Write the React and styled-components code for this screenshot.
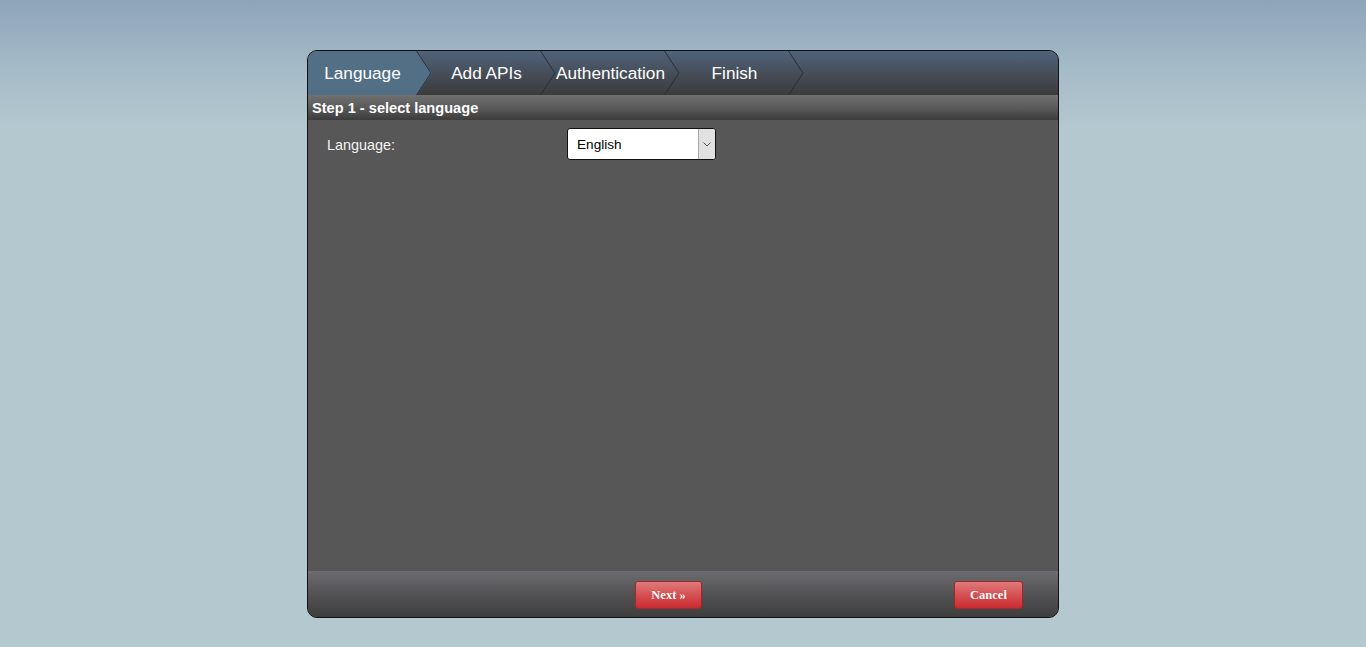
import React from "react";
import styled, { createGlobalStyle } from "styled-components";

const Global = createGlobalStyle`
  html, body { margin: 0; padding: 0; }
  body {
    min-height: 647px;
    background: linear-gradient(to bottom, #8ea5b9 0px, #a6bbc8 70px, #b4c8d0 130px, #b4c8d0 100%) no-repeat;
    background-color: #b4c8d0;
    font-family: "Liberation Sans", Arial, sans-serif;
  }
`;

const Page = styled.div`
  display: flex;
  justify-content: center;
  padding-top: 50px;
`;

const Panel = styled.div`
  width: 750px;
  height: 566px;
  border: 1px solid #111;
  border-radius: 10px;
  overflow: hidden;
  display: flex;
  flex-direction: column;
  background: #575757;
`;

const TabBar = styled.div`
  height: 44px;
  display: flex;
  background: linear-gradient(to bottom, #4f637b 0%, #454c56 55%, #3b3b3b 100%);
  flex-shrink: 0;
`;

const Tab = styled.div`
  position: relative;
  flex: 0 0 auto;
  width: ${(p) => (p.$first ? "124px" : "139px")};
  margin-left: ${(p) => (p.$first ? "0" : "-15px")};
  padding: 1px 15px 0 ${(p) => (p.$first ? "0" : "15px")};
  box-sizing: border-box;
  display: flex;
  align-items: center;
  justify-content: center;
  color: #fff;
  font-size: 17.2px;
  z-index: ${(p) => p.$z};
`;

const ActiveBg = styled.div`
  position: absolute;
  inset: 0;
  background: #536f85;
  clip-path: polygon(0 0, calc(100% - 15px) 0, 100% 50%, calc(100% - 15px) 100%, 0 100%);
`;

const TabLabel = styled.span`
  position: relative;
  white-space: nowrap;
`;

const Chevron = styled.svg`
  position: absolute;
  right: 0;
  top: 0;
  width: 16px;
  height: 44px;
`;

const StepHeader = styled.div`
  height: 25px;
  flex-shrink: 0;
  background: linear-gradient(to bottom, #707070 0%, #5a5a5a 50%, #3c3c3c 100%);
  color: #fff;
  font-weight: bold;
  font-size: 14.6px;
  display: flex;
  align-items: center;
  padding-left: 4px;
`;

const Content = styled.div`
  flex: 1;
  background: #575757;
  padding: 8px 0 0 19px;
`;

const Row = styled.div`
  display: flex;
  align-items: center;
  height: 32px;
`;

const Label = styled.span`
  width: 240px;
  color: #f2f2f2;
  font-size: 14.4px;
  padding-top: 2px;
`;

const Select = styled.div`
  width: 147px;
  height: 30px;
  border: 1px solid #111;
  border-radius: 3px;
  background: #fff;
  display: flex;
  overflow: hidden;
`;

const SelectText = styled.span`
  flex: 1;
  display: flex;
  align-items: center;
  padding: 1px 0 0 9px;
  font-size: 13.6px;
  color: #000;
`;

const SelectArrow = styled.span`
  width: 16px;
  background: #e1e1e1;
  border-left: 1px solid #a8a8a8;
  display: flex;
  align-items: center;
  justify-content: center;
`;

const Footer = styled.div`
  height: 46px;
  flex-shrink: 0;
  background: linear-gradient(to bottom, #6c6d70 0%, #555557 45%, #3d3d3d 100%);
  display: flex;
  align-items: center;
  padding-left: 327px;
`;

const Button = styled.button`
  height: 28px;
  width: ${(p) => p.$w}px;
  margin-left: ${(p) => p.$ml || 0}px;
  border: 1px solid #a3282b;
  border-radius: 3px;
  background: linear-gradient(to bottom, #e07a7a 0%, #d44c4e 55%, #c92c30 100%);
  color: #fff;
  font-family: "Liberation Serif", "Times New Roman", serif;
  font-weight: bold;
  font-size: 12.5px;
  padding: 0;
  margin-top: 2px;
  text-shadow: 0 0 1px rgba(80, 0, 0, 0.3);
`;

const tabs = ["Language", "Add APIs", "Authentication", "Finish"];

export default function App() {
  return (
    <>
      <Global />
      <Page>
        <Panel>
          <TabBar>
            {tabs.map((t, i) => (
              <Tab key={t} $first={i === 0} $z={10 - i}>
                {i === 0 && <ActiveBg />}
                <TabLabel>{t}</TabLabel>
                <Chevron viewBox="0 0 16 44">
                  <polyline points="0.5,0 15,22 0.5,44" fill="none" stroke="#2a2e34" strokeWidth="1" />
                </Chevron>
              </Tab>
            ))}
          </TabBar>
          <StepHeader>Step 1 - select language</StepHeader>
          <Content>
            <Row>
              <Label>Language:</Label>
              <Select>
                <SelectText>English</SelectText>
                <SelectArrow>
                  <svg width="8" height="5" viewBox="0 0 8 5">
                    <polyline points="0.5,0.5 4,4 7.5,0.5" fill="none" stroke="#555" strokeWidth="1" />
                  </svg>
                </SelectArrow>
              </Select>
            </Row>
          </Content>
          <Footer>
            <Button $w={67}>Next »</Button>
            <Button $w={69} $ml={252}>Cancel</Button>
          </Footer>
        </Panel>
      </Page>
    </>
  );
}
